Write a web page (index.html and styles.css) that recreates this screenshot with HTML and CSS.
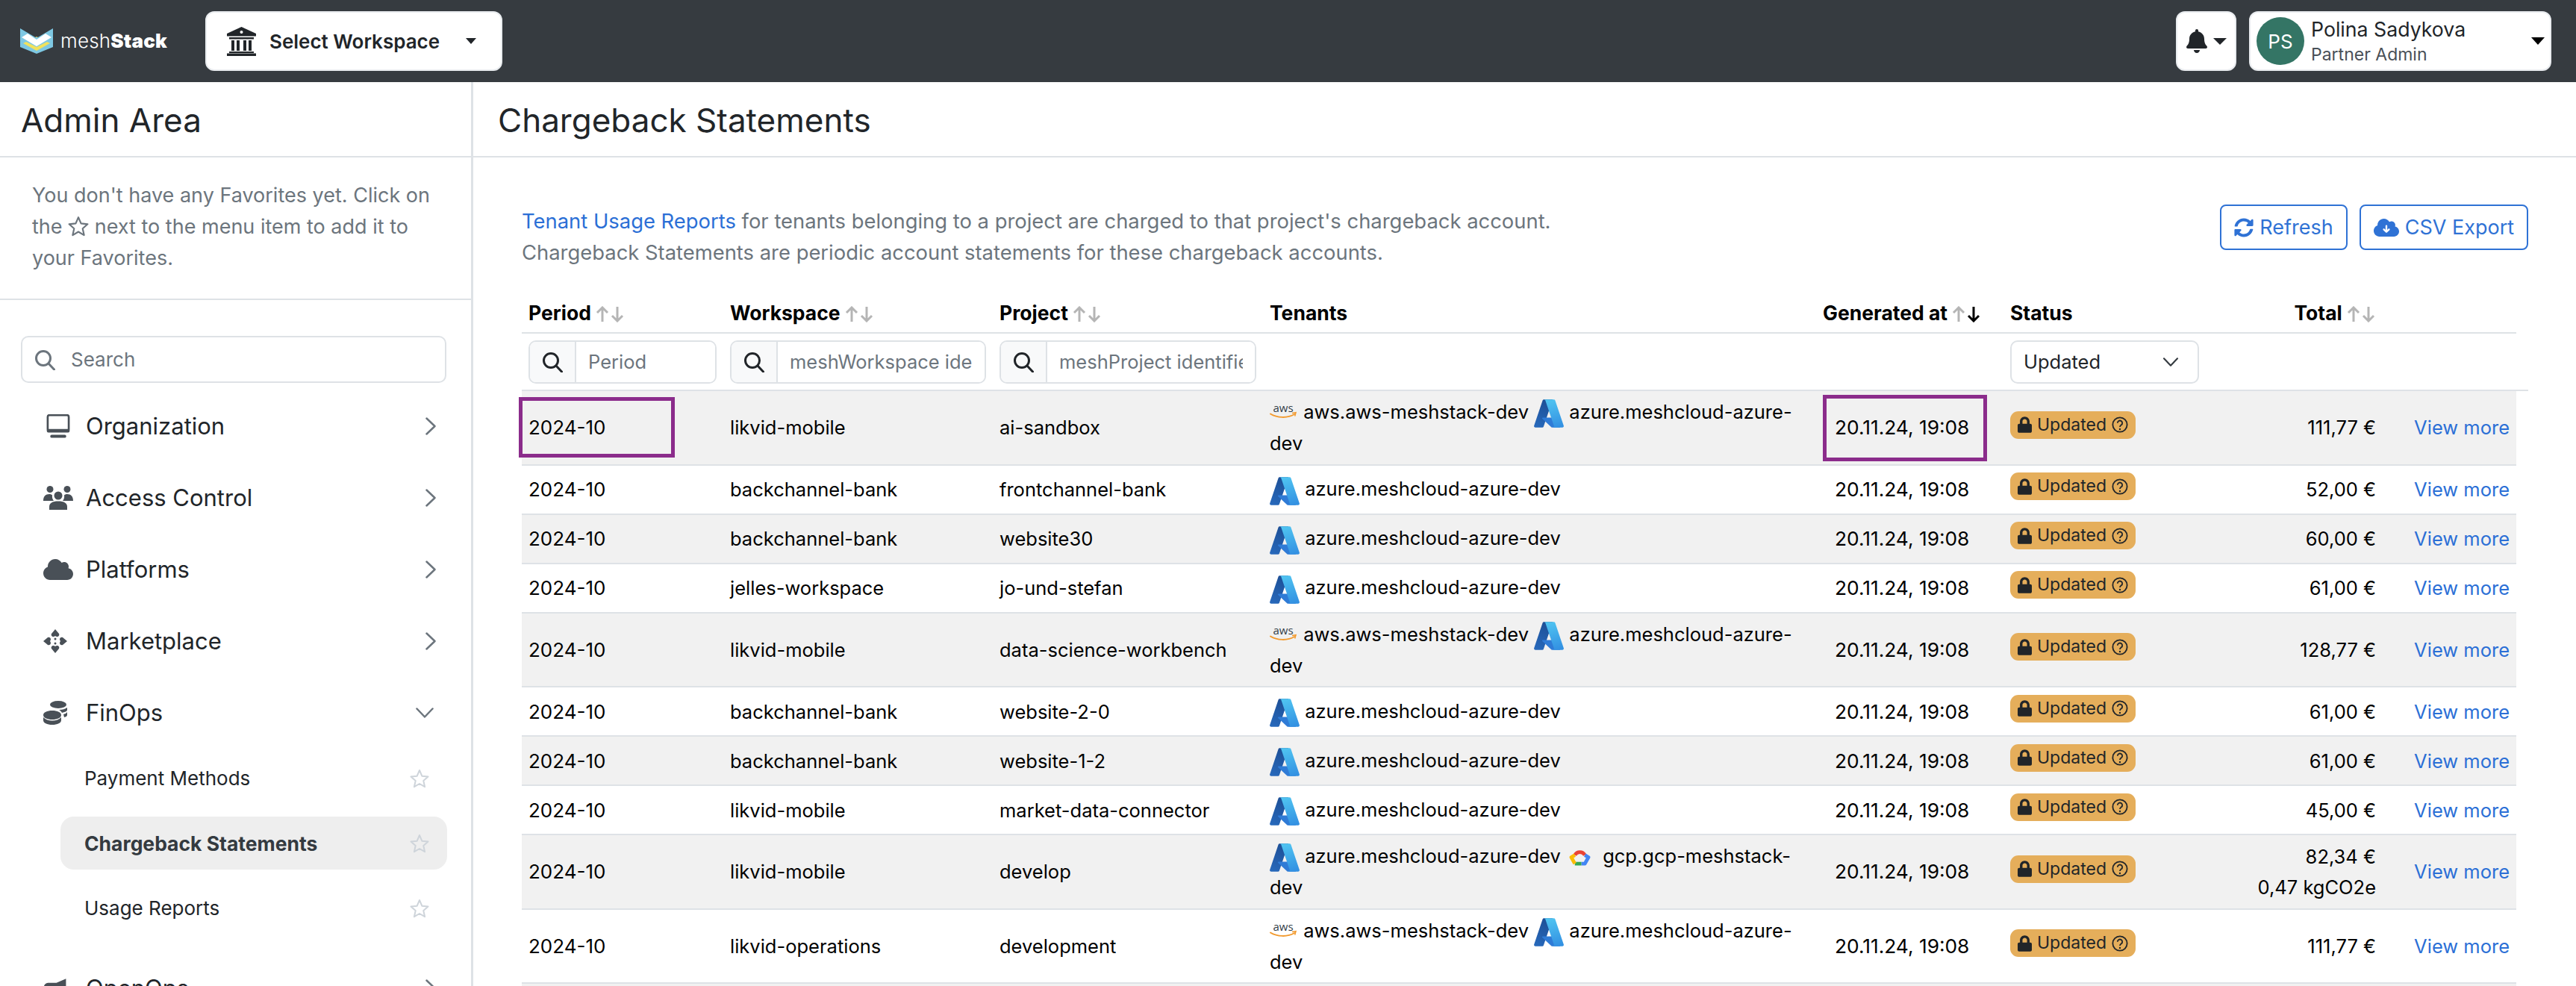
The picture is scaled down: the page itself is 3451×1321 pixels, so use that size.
FILE: index.html
```html
<!DOCTYPE html>
<html lang="en">
  <head>
    <meta charset="UTF-8" />
    <title>Chargeback Statements - meshStack</title>
    <link rel="stylesheet" href="styles.css">
  </head>
  <body>
    <!-- Shared icons -->
    <svg class="icon-defs" aria-hidden="true">
      <defs>
        <linearGradient id="azureDark" x1="0.6" y1="0" x2="0.3" y2="1">
          <stop offset="0" stop-color="#1d4f96" />
          <stop offset="1" stop-color="#2768ba" />
        </linearGradient>
        <linearGradient id="azureLight" x1="0.4" y1="0" x2="0.6" y2="1">
          <stop offset="0" stop-color="#4fc3f1" />
          <stop offset="1" stop-color="#3391e2" />
        </linearGradient>
        <symbol id="i-azure" viewBox="4 6 88 84">
          <path fill="url(#azureDark)" d="M33.338 6.544h26.038l-27.03 80.087a4.152 4.152 0 0 1-3.933 2.824H8.149a4.145 4.145 0 0 1-3.928-5.47L29.404 9.368a4.152 4.152 0 0 1 3.934-2.825z" />
          <path fill="#2f7bd6" d="M71.175 60.261h-41.29a1.911 1.911 0 0 0-1.305 3.309l26.532 24.764a4.171 4.171 0 0 0 2.846 1.121h23.38z" />
          <path fill="url(#azureLight)" d="M66.595 9.364a4.145 4.145 0 0 0-3.928-2.82H33.648a4.146 4.146 0 0 1 3.928 2.82l25.184 74.62a4.146 4.146 0 0 1-3.928 5.472h29.02a4.146 4.146 0 0 0 3.927-5.472z" />
        </symbol>
        <symbol id="i-aws" viewBox="0 0 36 22">
          <text x="18" y="11.5" text-anchor="middle" class="aws-word">aws</text>
          <path d="M1 14.5c9 5.5 23 6 32 .5" fill="none" stroke="#f29a2e" stroke-width="2" stroke-linecap="round" />
          <path d="M30 13.5l5-.8-1.300 4.800" fill="none" stroke="#f29a2e" stroke-width="1.500" />
        </symbol>
        <symbol id="i-gcp" viewBox="0 0 30 24">
          <path d="M8 9a8 8 0 0 1 14 0" fill="none" stroke="#ea4335" stroke-width="5" />
          <path d="M22 9l5 3-5 9h-5" fill="none" stroke="#4285f4" stroke-width="5" stroke-linejoin="round" />
          <path d="M17 21h-9" fill="none" stroke="#34a853" stroke-width="5" />
          <path d="M8 21l-5-9 5-3" fill="none" stroke="#fbbc05" stroke-width="5" stroke-linejoin="round" />
        </symbol>
        <symbol id="i-search" viewBox="0 0 28 28">
          <circle cx="12" cy="12" r="9.500" fill="none" stroke="currentColor" stroke-width="3" />
          <path d="M19 19l7.500 8" fill="none" stroke="currentColor" stroke-width="3" stroke-linecap="round" />
        </symbol>
        <symbol id="i-star" viewBox="0 0 26 26">
          <path d="M13 2l3.300 7.700 8.200.8-6.200 5.500 1.800 8.200L13 20l-7.100 4.200 1.800-8.200-6.200-5.500 8.200-.8z" fill="none" stroke="currentColor" stroke-width="2" stroke-linejoin="round" />
        </symbol>
        <symbol id="i-sort" viewBox="0 0 39 22">
          <path class="sort-up" d="M9 21V2M2 9l7-7 7 7" fill="none" stroke-width="3" />
          <path class="sort-down" d="M29 1v19M22 13l7 7 7-7" fill="none" stroke-width="3" />
        </symbol>
        <symbol id="i-lock" viewBox="0 0 448 512">
          <path fill="currentColor" d="M400 224h-24v-72C376 68.200 307.800 0 224 0S72 68.200 72 152v72H48c-26.500 0-48 21.500-48 48v192c0 26.500 21.500 48 48 48h352c26.500 0 48-21.500 48-48V272c0-26.500-21.500-48-48-48zm-104 0H152v-72c0-39.700 32.300-72 72-72s72 32.300 72 72v72z" />
        </symbol>
        <symbol id="i-help" viewBox="0 0 24 24">
          <circle cx="12" cy="12" r="10.500" fill="none" stroke="currentColor" stroke-width="2" />
          <path d="M8.500 9.500a3.500 3.500 0 1 1 5.500 2.900c-1.300.9-2 1.500-2 3" fill="none" stroke="currentColor" stroke-width="2" />
          <circle cx="12" cy="18.500" r="1.300" fill="currentColor" />
        </symbol>
        <symbol id="i-chevron" viewBox="0 0 14 24">
          <path d="M1.500 1.500L12.500 12 1.500 22.500" fill="none" stroke="currentColor" stroke-width="2.500" stroke-linecap="round" stroke-linejoin="round" />
        </symbol>
      </defs>
    </svg>

    <header class="topbar">
      <a class="brand" href="#">
        <svg class="brand-mark" viewBox="0 0 44 34" aria-hidden="true">
          <path fill="#7ec8e3" d="M0 0l22 13L44 0v25L22 34 0 25z" />
          <path fill="#f2e25c" d="M4 20l18-9 18 9-18 10z" />
          <path fill="#7ec8e3" d="M2 15l20 10 20-10v-3H2z" />
          <path fill="#ffffff" d="M2 12l8-5 12 8 12-8 8 5-20 12z" />
        </svg>
        <span class="brand-name">mesh<b>Stack</b></span>
      </a>
      <button class="bar-btn workspace-btn">
        <svg class="landmark" viewBox="0 0 39 39" aria-hidden="true">
          <path fill="currentColor" d="M19.500 0L39 9v3.500H0V9z" />
          <path fill="currentColor" d="M3 14h33v2.500H3zM6 18h4v14H6zM13 18h4v14h-4zM22 18h4v14h-4zM29 18h4v14h-4zM3 33h33v2H3zM0 35.500h39V39H0z" />
          <circle cx="19.500" cy="7" r="2" fill="#fff" />
        </svg>
        <span>Select Workspace</span>
        <i class="caret"></i>
      </button>
      <div class="topbar-right">
        <button class="bar-btn bell-btn">
          <svg class="bell" viewBox="0 0 448 512" aria-hidden="true">
            <path fill="currentColor" d="M224 512c35.320 0 63.970-28.650 63.970-64H160.030c0 35.350 28.650 64 63.970 64zm215.390-149.710c-19.320-20.760-55.470-51.990-55.470-154.290 0-77.700-54.480-139.900-127.940-155.160V32c0-17.670-14.320-32-31.980-32s-31.980 14.330-31.980 32v20.840C118.560 68.100 64.080 130.300 64.080 208c0 102.300-36.150 133.530-55.470 154.290-6 6.450-8.660 14.160-8.610 21.710.11 16.400 12.980 32 32.100 32h383.800c19.120 0 32-15.600 32.100-32 .05-7.550-2.610-15.270-8.610-21.710z" />
          </svg>
          <i class="caret"></i>
        </button>
        <button class="bar-btn user-btn">
          <span class="avatar">PS</span>
          <span class="user-text">
            <span class="user-name">Polina Sadykova</span>
            <span class="user-role">Partner Admin</span>
          </span>
          <i class="caret caret-black"></i>
        </button>
      </div>
    </header>

    <div class="layout">
      <aside class="sidebar">
        <h1 class="area-title">Admin Area</h1>
        <p class="favorites-note">
          You don't have any Favorites yet. Click on the
          <svg class="note-star"><use href="#i-star" /></svg>
          next to the menu item to add it to your Favorites.
        </p>
        <div class="side-search">
          <svg class="side-search-icon"><use href="#i-search" /></svg>
          <span>Search</span>
        </div>
        <nav>
          <a class="nav-item" href="#">
            <span class="nav-icon">
              <svg class="icon-desktop" viewBox="0 0 40 42">
                <rect x="1.500" y="1.500" width="37" height="28" rx="3" fill="none" stroke="currentColor" stroke-width="3.500" />
                <rect x="0" y="26" width="40" height="6" rx="2.500" fill="currentColor" />
                <rect x="6" y="36" width="28" height="5.500" rx="2.500" fill="currentColor" />
              </svg>
            </span>
            <span class="nav-label">Organization</span>
            <svg class="nav-chevron"><use href="#i-chevron" /></svg>
          </a>
          <a class="nav-item" href="#">
            <span class="nav-icon">
              <svg class="icon-users" viewBox="0 0 40 32">
                <circle cx="9" cy="4.500" r="4.500" fill="currentColor" />
                <circle cx="32" cy="4.500" r="4.500" fill="currentColor" />
                <circle cx="20" cy="13" r="5.500" fill="currentColor" />
                <path fill="currentColor" d="M0 20c0-6 3-9 8-9 2 0 3 .5 4 1.500-.5 3 .5 5.500 2 7.500zM40 20c0-6-3-9-8-9-2 0-3 .5-4 1.500.5 3-.5 5.500-2 7.500zM8 32v-4c0-5 4-7.500 12-7.500S32 23 32 28v4z" />
              </svg>
            </span>
            <span class="nav-label">Access Control</span>
            <svg class="nav-chevron"><use href="#i-chevron" /></svg>
          </a>
          <a class="nav-item" href="#">
            <span class="nav-icon">
              <svg class="icon-cloud" viewBox="0 0 640 512">
                <path fill="currentColor" d="M537.600 226.600c4.100-10.700 6.400-22.400 6.400-34.600 0-53-43-96-96-96-19.700 0-38.100 6-53.300 16.200C367 64.200 315.300 32 256 32c-88.400 0-160 71.600-160 160 0 2.700.1 5.400.2 8.100C40.200 219.800 0 273.200 0 336c0 79.500 64.500 144 144 144h368c70.700 0 128-57.300 128-128 0-61.900-44-113.600-102.400-125.400z" />
              </svg>
            </span>
            <span class="nav-label">Platforms</span>
            <svg class="nav-chevron"><use href="#i-chevron" /></svg>
          </a>
          <a class="nav-item" href="#">
            <span class="nav-icon">
              <svg class="icon-market" viewBox="0 0 32 32">
                <path fill="currentColor" d="M16 0l5 6c1 2-.5 4-2.500 4-1 0-1.800-.4-2.500-1-.7.6-1.500 1-2.500 1-2 0-3.500-2-2.500-4zM16 32l5-6c1-2-.5-4-2.500-4-1 0-1.800.4-2.500 1-.7-.6-1.500-1-2.500-1-2 0-3.500 2-2.500 4zM0 16l6-5c2-1 4 .5 4 2.500 0 1-.4 1.800-1 2.500.6.700 1 1.500 1 2.500 0 2-2 3.500-4 2.500zM32 16l-6-5c-2-1-4 .5-4 2.500 0 1 .4 1.800 1 2.500-.6.700-1 1.500-1 2.500 0 2 2 3.500 4 2.500z" />
                <circle cx="16" cy="13" r="1.500" fill="currentColor" />
                <circle cx="16" cy="19" r="1.500" fill="currentColor" />
              </svg>
            </span>
            <span class="nav-label">Marketplace</span>
            <svg class="nav-chevron"><use href="#i-chevron" /></svg>
          </a>
          <a class="nav-item" href="#">
            <span class="nav-icon">
              <svg class="icon-coins" viewBox="0 0 32 32">
                <ellipse cx="20" cy="5" rx="11" ry="5" fill="currentColor" />
                <path fill="currentColor" d="M21 12c5 0 8-1 11-3v3c0 2-3 3-7 4-1-2-2-3-4-4zM27 18c2-.5 4-1.500 5-3v4c0 1.500-2 2.500-4 3zM12 13c7 0 12 2.500 12 6s-5 6-12 6-12-2.500-12-6 5-6 12-6zM0 22c3 3 7 4.500 12 4.500S21 25 24 22v4c0 3.500-5 6-12 6S0 29.500 0 26z" />
              </svg>
            </span>
            <span class="nav-label">FinOps</span>
            <svg class="nav-chevron nav-chevron-open"><use href="#i-chevron" /></svg>
          </a>
          <div class="subnav">
            <a class="sub-item" href="#">
              <span>Payment Methods</span>
              <svg class="sub-star"><use href="#i-star" /></svg>
            </a>
            <a class="sub-item active" href="#">
              <span>Chargeback Statements</span>
              <svg class="sub-star"><use href="#i-star" /></svg>
            </a>
            <a class="sub-item" href="#">
              <span>Usage Reports</span>
              <svg class="sub-star"><use href="#i-star" /></svg>
            </a>
          </div>
          <a class="nav-item" href="#">
            <span class="nav-icon">
              <svg class="icon-horn" viewBox="0 0 40 32">
                <path fill="currentColor" d="M38 0v28L22 21H8a7 7 0 0 1 0-14h14z" />
              </svg>
            </span>
            <span class="nav-label">OpenOps</span>
            <svg class="nav-chevron"><use href="#i-chevron" /></svg>
          </a>
        </nav>
      </aside>

      <main class="content">
        <h2 class="page-title">Chargeback Statements</h2>
        <div class="page-body">
          <div class="intro">
            <p class="intro-text">
              <a href="#">Tenant Usage Reports</a> for tenants belonging to a project are charged to that project's chargeback account.<br />
              Chargeback Statements are periodic account statements for these chargeback accounts.
            </p>
            <div class="actions">
              <button class="outline-btn refresh-btn">
                <svg viewBox="0 0 512 512" aria-hidden="true">
                  <path fill="currentColor" d="M370.720 133.280C339.458 104.008 298.888 87.962 255.848 88c-77.458.068-144.328 53.178-162.791 126.850-1.344 5.363-6.122 9.150-11.651 9.150H24.103c-7.498 0-13.194-6.807-11.807-14.176C33.933 94.924 134.813 8 256 8c66.448 0 126.791 26.136 171.315 68.685L463.030 40.970C478.149 25.851 504 36.559 504 57.941V192c0 13.255-10.745 24-24 24H345.941c-21.382 0-32.090-25.851-16.971-40.971l41.750-41.749zM32 296h134.059c21.382 0 32.090 25.851 16.971 40.971l-41.750 41.750c31.262 29.273 71.835 45.319 114.876 45.280 77.418-.07 144.315-53.144 162.787-126.849 1.344-5.363 6.122-9.150 11.651-9.150h57.304c7.498 0 13.194 6.807 11.807 14.176C478.067 417.076 377.187 504 256 504c-66.448 0-126.791-26.136-171.315-68.685L48.970 471.030C33.851 486.149 8 475.441 8 454.059V320c0-13.255 10.745-24 24-24z" />
                </svg>
                Refresh
              </button>
              <button class="outline-btn export-btn">
                <svg viewBox="0 0 640 512" aria-hidden="true">
                  <path fill="currentColor" d="M537.600 226.600c4.100-10.700 6.400-22.400 6.400-34.600 0-53-43-96-96-96-19.700 0-38.100 6-53.300 16.200C367 64.200 315.300 32 256 32c-88.400 0-160 71.600-160 160 0 2.700.1 5.400.2 8.100C40.200 219.800 0 273.200 0 336c0 79.500 64.500 144 144 144h368c70.700 0 128-57.300 128-128 0-61.900-44-113.600-102.400-125.400z" />
                  <path fill="none" stroke="#fff" stroke-width="44" stroke-linecap="round" stroke-linejoin="round" d="M320 210v150M255 300l65 65 65-65" />
                </svg>
                CSV Export
              </button>
            </div>
          </div>

          <table class="statements">
            <colgroup>
              <col class="col-period" />
              <col class="col-workspace" />
              <col class="col-project" />
              <col class="col-tenants" />
              <col class="col-generated" />
              <col class="col-status" />
              <col class="col-total" />
              <col class="col-action" />
            </colgroup>
            <thead>
              <tr class="head-row">
                <th>Period <svg class="sort"><use href="#i-sort" /></svg></th>
                <th>Workspace <svg class="sort"><use href="#i-sort" /></svg></th>
                <th>Project <svg class="sort"><use href="#i-sort" /></svg></th>
                <th>Tenants</th>
                <th>Generated at <svg class="sort sorted-desc"><use href="#i-sort" /></svg></th>
                <th>Status</th>
                <th class="num">Total <svg class="sort"><use href="#i-sort" /></svg></th>
                <th></th>
              </tr>
              <tr class="filter-row">
                <td>
                  <div class="filter"><span class="filter-icon"><svg><use href="#i-search" /></svg></span><input type="text" placeholder="Period" /></div>
                </td>
                <td>
                  <div class="filter"><span class="filter-icon"><svg><use href="#i-search" /></svg></span><input type="text" placeholder="meshWorkspace identifier" /></div>
                </td>
                <td>
                  <div class="filter"><span class="filter-icon"><svg><use href="#i-search" /></svg></span><input type="text" placeholder="meshProject identifier" /></div>
                </td>
                <td></td>
                <td></td>
                <td>
                  <div class="status-select">
                    <span>Updated</span>
                    <svg class="select-chevron"><use href="#i-chevron" /></svg>
                  </div>
                </td>
                <td></td>
                <td></td>
              </tr>
            </thead>
            <tbody>
              <tr class="tall">
                <td class="period"><div class="marked-period">2024-10</div></td>
                <td>likvid-mobile</td>
                <td>ai-sandbox</td>
                <td><svg class="t-aws"><use href="#i-aws" /></svg> aws.aws-meshstack-dev <svg class="t-azure"><use href="#i-azure" /></svg> azure.meshcloud-azure-dev</td>
                <td class="date marked-date">20.11.24, 19:08</td>
                <td><span class="badge"><svg class="badge-lock"><use href="#i-lock" /></svg>Updated<svg class="badge-help"><use href="#i-help" /></svg></span></td>
                <td class="num">111,77 €</td>
                <td class="more"><a href="#">View more</a></td>
              </tr>
              <tr>
                <td class="period">2024-10</td>
                <td>backchannel-bank</td>
                <td>frontchannel-bank</td>
                <td><svg class="t-azure"><use href="#i-azure" /></svg> azure.meshcloud-azure-dev</td>
                <td class="date">20.11.24, 19:08</td>
                <td><span class="badge"><svg class="badge-lock"><use href="#i-lock" /></svg>Updated<svg class="badge-help"><use href="#i-help" /></svg></span></td>
                <td class="num">52,00 €</td>
                <td class="more"><a href="#">View more</a></td>
              </tr>
              <tr>
                <td class="period">2024-10</td>
                <td>backchannel-bank</td>
                <td>website30</td>
                <td><svg class="t-azure"><use href="#i-azure" /></svg> azure.meshcloud-azure-dev</td>
                <td class="date">20.11.24, 19:08</td>
                <td><span class="badge"><svg class="badge-lock"><use href="#i-lock" /></svg>Updated<svg class="badge-help"><use href="#i-help" /></svg></span></td>
                <td class="num">60,00 €</td>
                <td class="more"><a href="#">View more</a></td>
              </tr>
              <tr>
                <td class="period">2024-10</td>
                <td>jelles-workspace</td>
                <td>jo-und-stefan</td>
                <td><svg class="t-azure"><use href="#i-azure" /></svg> azure.meshcloud-azure-dev</td>
                <td class="date">20.11.24, 19:08</td>
                <td><span class="badge"><svg class="badge-lock"><use href="#i-lock" /></svg>Updated<svg class="badge-help"><use href="#i-help" /></svg></span></td>
                <td class="num">61,00 €</td>
                <td class="more"><a href="#">View more</a></td>
              </tr>
              <tr class="tall">
                <td class="period">2024-10</td>
                <td>likvid-mobile</td>
                <td>data-science-workbench</td>
                <td><svg class="t-aws"><use href="#i-aws" /></svg> aws.aws-meshstack-dev <svg class="t-azure"><use href="#i-azure" /></svg> azure.meshcloud-azure-dev</td>
                <td class="date">20.11.24, 19:08</td>
                <td><span class="badge"><svg class="badge-lock"><use href="#i-lock" /></svg>Updated<svg class="badge-help"><use href="#i-help" /></svg></span></td>
                <td class="num">128,77 €</td>
                <td class="more"><a href="#">View more</a></td>
              </tr>
              <tr>
                <td class="period">2024-10</td>
                <td>backchannel-bank</td>
                <td>website-2-0</td>
                <td><svg class="t-azure"><use href="#i-azure" /></svg> azure.meshcloud-azure-dev</td>
                <td class="date">20.11.24, 19:08</td>
                <td><span class="badge"><svg class="badge-lock"><use href="#i-lock" /></svg>Updated<svg class="badge-help"><use href="#i-help" /></svg></span></td>
                <td class="num">61,00 €</td>
                <td class="more"><a href="#">View more</a></td>
              </tr>
              <tr>
                <td class="period">2024-10</td>
                <td>backchannel-bank</td>
                <td>website-1-2</td>
                <td><svg class="t-azure"><use href="#i-azure" /></svg> azure.meshcloud-azure-dev</td>
                <td class="date">20.11.24, 19:08</td>
                <td><span class="badge"><svg class="badge-lock"><use href="#i-lock" /></svg>Updated<svg class="badge-help"><use href="#i-help" /></svg></span></td>
                <td class="num">61,00 €</td>
                <td class="more"><a href="#">View more</a></td>
              </tr>
              <tr>
                <td class="period">2024-10</td>
                <td>likvid-mobile</td>
                <td>market-data-connector</td>
                <td><svg class="t-azure"><use href="#i-azure" /></svg> azure.meshcloud-azure-dev</td>
                <td class="date">20.11.24, 19:08</td>
                <td><span class="badge"><svg class="badge-lock"><use href="#i-lock" /></svg>Updated<svg class="badge-help"><use href="#i-help" /></svg></span></td>
                <td class="num">45,00 €</td>
                <td class="more"><a href="#">View more</a></td>
              </tr>
              <tr class="tall">
                <td class="period">2024-10</td>
                <td>likvid-mobile</td>
                <td>develop</td>
                <td><svg class="t-azure"><use href="#i-azure" /></svg> azure.meshcloud-azure-dev <svg class="t-gcp"><use href="#i-gcp" /></svg> gcp.gcp-meshstack-dev</td>
                <td class="date">20.11.24, 19:08</td>
                <td><span class="badge"><svg class="badge-lock"><use href="#i-lock" /></svg>Updated<svg class="badge-help"><use href="#i-help" /></svg></span></td>
                <td class="num">82,34 €<br />0,47 kgCO2e</td>
                <td class="more"><a href="#">View more</a></td>
              </tr>
              <tr class="tall">
                <td class="period">2024-10</td>
                <td>likvid-operations</td>
                <td>development</td>
                <td><svg class="t-aws"><use href="#i-aws" /></svg> aws.aws-meshstack-dev <svg class="t-azure"><use href="#i-azure" /></svg> azure.meshcloud-azure-dev</td>
                <td class="date">20.11.24, 19:08</td>
                <td><span class="badge"><svg class="badge-lock"><use href="#i-lock" /></svg>Updated<svg class="badge-help"><use href="#i-help" /></svg></span></td>
                <td class="num">111,77 €</td>
                <td class="more"><a href="#">View more</a></td>
              </tr>
              <tr>
                <td colspan="8"></td>
              </tr>
            </tbody>
          </table>
        </div>
      </main>
    </div>
  </body>
</html>
```

FILE: styles.css
```css
/* Page */
html,
body {
  height: 100%;
}

body {
  margin: 0;
  overflow: hidden;
  font-family: Inter, "Liberation Sans", sans-serif;
  font-size: 27px;
  line-height: 42px;
  color: #212529;
  background-color: #ffffff;
}

a {
  text-decoration: none;
  color: inherit;
}

button {
  font-family: inherit;
  cursor: pointer;
}

.icon-defs {
  position: absolute;
  width: 0;
  height: 0;
}

/* Top bar */
.topbar {
  display: flex;
  align-items: center;
  height: 110px;
  padding: 0 33px 0 27px;
  background-color: #363b40;
}

.brand {
  display: flex;
  align-items: center;
  gap: 10px;
  width: 248px;
  color: #ffffff;
}

.brand-mark {
  width: 44px;
  height: 34px;
}

.brand-name {
  font-size: 26px;
  font-weight: 300;
  letter-spacing: 0.2px;
}

.brand-name b {
  font-weight: 900;
}

.bar-btn {
  display: flex;
  align-items: center;
  height: 80px;
  padding: 0;
  border: 2px solid #e9ecef;
  border-radius: 12px;
  background-color: #ffffff;
  color: #212529;
}

.workspace-btn {
  width: 398px;
  padding-left: 27px;
  font-size: 26px;
  font-weight: 600;
}

.landmark {
  width: 39px;
  height: 39px;
  margin-right: 18px;
}

.caret {
  width: 0;
  height: 0;
  border-top: 8px solid #212529;
  border-left: 7px solid transparent;
  border-right: 7px solid transparent;
}

.workspace-btn .caret {
  margin-left: 35px;
}

.topbar-right {
  display: flex;
  gap: 17px;
  margin-left: auto;
}

.bell-btn {
  width: 81px;
  padding-left: 12px;
}

.bell {
  width: 28px;
  height: 32px;
  margin-right: 8px;
}

.bell-btn .caret {
  border-top-width: 9px;
  border-left-width: 9px;
  border-right-width: 9px;
}

.user-btn {
  width: 405px;
  padding-left: 8px;
  text-align: left;
}

.avatar {
  display: flex;
  align-items: center;
  justify-content: center;
  width: 64px;
  height: 64px;
  border-radius: 50%;
  background-color: #347565;
  color: #ffffff;
  font-size: 26px;
}

.user-text {
  display: flex;
  flex-direction: column;
  margin-left: 9px;
}

.user-name {
  font-size: 26.7px;
  line-height: 36px;
}

.user-role {
  font-size: 23px;
  line-height: 32px;
  color: #495057;
}

.caret-black {
  margin-left: auto;
  margin-right: 7px;
  border-top: 10px solid #000000;
  border-left-width: 9px;
  border-right-width: 9px;
}

/* Layout */
.layout {
  display: flex;
  height: calc(100vh - 110px);
}

/* Sidebar */
.sidebar {
  flex: 0 0 634px;
  box-sizing: border-box;
  border-right: 3px solid #dee2e6;
}

.area-title {
  height: 101px;
  margin: 0;
  padding: 17px 0 0 28px;
  box-sizing: border-box;
  border-bottom: 2px solid #dee2e6;
  font-size: 44px;
  font-weight: 400;
  line-height: 68px;
}

.favorites-note {
  margin: 0;
  padding: 30px 43px 33px;
  border-bottom: 2px solid #dee2e6;
  color: #6c757d;
}

.note-star {
  width: 28px;
  height: 28px;
  vertical-align: -4px;
}

.side-search {
  display: flex;
  align-items: center;
  gap: 21px;
  height: 63px;
  margin: 48px 33px 10px 28px;
  padding-left: 16px;
  box-sizing: border-box;
  border: 2px solid #dee2e6;
  border-radius: 10px;
  color: #6c757d;
  font-size: 26px;
}

.side-search-icon {
  width: 28px;
  height: 28px;
}

.nav-item {
  display: flex;
  align-items: center;
  height: 96px;
  padding: 0 47px 0 58px;
  font-size: 31px;
}

.nav-icon {
  display: flex;
  align-items: center;
  flex: 0 0 57px;
  color: #495057;
}

.icon-desktop {
  width: 40px;
  height: 32px;
}

.icon-users {
  width: 40px;
  height: 32px;
}

.icon-cloud {
  width: 40px;
  height: 32px;
}

.icon-market {
  width: 32px;
  height: 32px;
}

.icon-coins {
  width: 32px;
  height: 32px;
}

.icon-horn {
  width: 32px;
  height: 26px;
}

.nav-chevron {
  width: 14px;
  height: 24px;
  margin-left: auto;
  color: #6c757d;
}

.nav-chevron-open {
  transform: rotate(90deg);
  margin-right: 8px;
}

.subnav {
  display: flex;
  flex-direction: column;
  gap: 16px;
  margin: 4px 0 24px;
}

.sub-item {
  display: flex;
  align-items: center;
  justify-content: space-between;
  height: 71px;
  margin: 0 32px 0 81px;
  padding: 0 24px 0 32px;
  border-radius: 18px;
  font-size: 26px;
}

.sub-item.active {
  background-color: #eeeeee;
  color: #343a40;
  font-size: 26.5px;
  font-weight: 700;
}

.sub-star {
  width: 26px;
  height: 26px;
  color: #ced4da;
}

/* Main content */
.content {
  flex: 1;
  min-width: 0;
}

.page-title {
  height: 101px;
  margin: 0;
  padding: 17px 0 0 33px;
  box-sizing: border-box;
  border-bottom: 2px solid #dee2e6;
  font-size: 44px;
  font-weight: 400;
  line-height: 68px;
}

.page-body {
  padding: 64px 64px 0 65px;
}

.intro {
  display: flex;
  justify-content: space-between;
  align-items: flex-start;
}

.intro-text {
  margin: 0;
  color: #6c757d;
  font-size: 27.4px;
}

.intro-text a {
  color: #2b6fd6;
}

.actions {
  display: flex;
  gap: 16px;
  margin-top: -1px;
}

.outline-btn {
  display: flex;
  align-items: center;
  justify-content: center;
  gap: 8px;
  height: 61px;
  padding: 0;
  border: 2px solid #2f72d5;
  border-radius: 8px;
  background-color: #ffffff;
  color: #2f72d5;
  font-size: 27px;
}

.refresh-btn {
  width: 171px;
}

.export-btn {
  width: 226px;
}

.outline-btn svg {
  width: 26px;
  height: 28px;
}

.export-btn svg {
  width: 34px;
}

/* Table */
.statements {
  width: 2672px;
  margin-top: 30px;
  border-collapse: collapse;
  table-layout: fixed;
  font-size: 25.5px;
  line-height: 41px;
}

.col-period { width: 270px; }
.col-workspace { width: 361px; }
.col-project { width: 362px; }
.col-tenants { width: 741px; }
.col-generated { width: 251px; }
.col-status { width: 271px; }
.col-total { width: 237px; }
.col-action { width: 179px; }

.statements th,
.statements td {
  padding: 0 9px;
  border-bottom: 2px solid #dee2e6;
  text-align: left;
  vertical-align: middle;
  color: #000000;
}

.statements th {
  height: 52px;
  padding-top: 4px;
  font-size: 26.5px;
  font-weight: 700;
  white-space: nowrap;
}

.statements .num {
  text-align: right;
}

.statements .period {
  font-size: 26px;
}

.sort {
  width: 39px;
  height: 22px;
  vertical-align: -3px;
  stroke: #b5b5b5;
}

.sorted-desc {
  --sort-down: #000000;
}

.sort-down {
  stroke: var(--sort-down, #b5b5b5);
}

.filter-row td {
  position: relative;
  height: 75px;
}

/* The rule under the filter row runs on past the striped rows */
.filter-row td:last-child::after {
  content: "";
  position: absolute;
  left: 100%;
  bottom: -2px;
  width: 16px;
  height: 2px;
  background-color: #dee2e6;
}

.filter {
  display: flex;
  height: 58px;
  box-sizing: border-box;
  border: 2px solid #dee2e6;
  border-radius: 10px;
  overflow: hidden;
}

.filter-icon {
  display: flex;
  align-items: center;
  justify-content: center;
  flex: 0 0 60px;
  border-right: 2px solid #dee2e6;
  background-color: #f8f9fa;
  color: #212529;
}

.filter-icon svg {
  width: 28px;
  height: 28px;
}

.filter input {
  flex: 1;
  min-width: 0;
  padding: 0 16px;
  border: none;
  outline: none;
  font-family: inherit;
  font-size: 25.5px;
}

.filter input::placeholder {
  color: #6c757d;
  opacity: 1;
}

.status-select {
  display: flex;
  align-items: center;
  justify-content: space-between;
  width: 253px;
  height: 58px;
  padding: 0 30px 0 16px;
  box-sizing: border-box;
  border: 2px solid #dee2e6;
  border-radius: 10px;
  color: #212529;
}

.select-chevron {
  width: 12px;
  height: 22px;
  transform: rotate(90deg);
  color: #343a40;
}

.statements tbody td {
  height: 64px;
}

.statements tbody tr:nth-child(odd) td {
  background-color: #f1f1f1;
}

.statements tbody tr.tall td {
  height: 97.5px;
}

.t-aws {
  width: 36px;
  height: 22px;
  margin-right: 2px;
  vertical-align: -1px;
}

.aws-word {
  font-family: "Open Sans", sans-serif;
  font-size: 15px;
  fill: #333e48;
}

.t-azure {
  width: 40px;
  height: 38px;
  vertical-align: middle;
}

.t-gcp {
  width: 29px;
  height: 23px;
  margin: 0 9px 0 4px;
  vertical-align: -4px;
}

.statements .date {
  padding-left: 25px;
  font-size: 26.3px;
}

.marked-date {
  position: relative;
}

.marked-date::after {
  content: "";
  position: absolute;
  left: 9px;
  top: 5px;
  width: 220px;
  height: 89px;
  box-sizing: border-box;
  border: 5px solid #8b2c8b;
}

.marked-period {
  position: relative;
}

.marked-period::after {
  content: "";
  position: absolute;
  left: -13px;
  top: -20px;
  width: 209px;
  height: 81px;
  box-sizing: border-box;
  border: 5px solid #8b2c8b;
}

.badge {
  display: inline-flex;
  align-items: center;
  height: 37px;
  padding: 0 10px;
  border-radius: 11px;
  background-color: #e5ae5b;
  font-size: 23px;
  color: #212529;
  vertical-align: 3px;
}

.badge-lock {
  width: 19px;
  height: 24px;
  margin-right: 7px;
}

.badge-help {
  width: 22px;
  height: 22px;
  margin-left: 7px;
}

.statements .more {
  text-align: right;
}

.more a {
  color: #2b6fd6;
}
```
